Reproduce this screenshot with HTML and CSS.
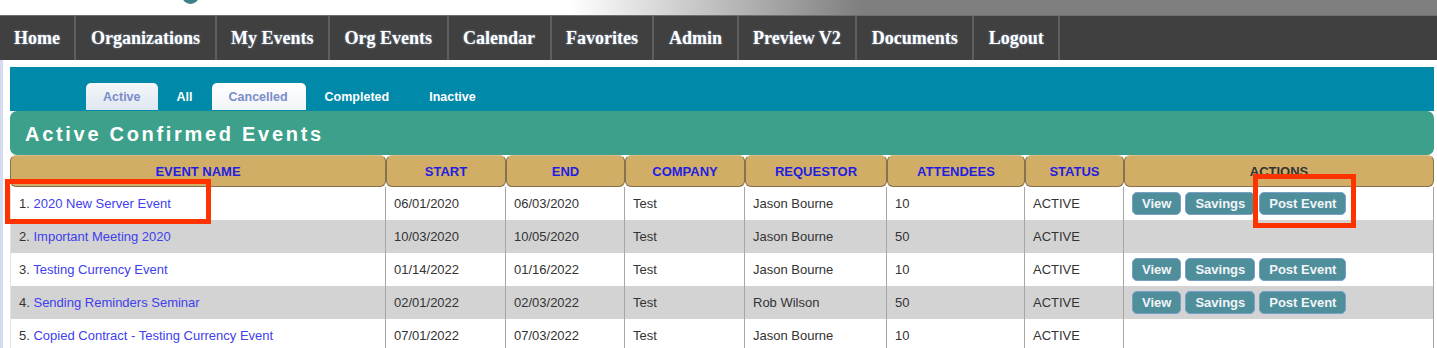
FILE: index.html
```html
<!DOCTYPE html>
<html lang="en">
<head>
  <meta charset="UTF-8">
  <meta name="viewport" content="width=device-width, initial-scale=1.0">
  <title>Active Confirmed Events</title>
  <link rel="stylesheet" href="styles.css">
</head>
<body>
  <div class="topbar">
    <div class="logo-dot"></div>
  </div>
  <div class="nav">
    <a class="nav-item" href="#">Home</a>
    <a class="nav-item" href="#">Organizations</a>
    <a class="nav-item" href="#">My Events</a>
    <a class="nav-item" href="#">Org Events</a>
    <a class="nav-item" href="#">Calendar</a>
    <a class="nav-item" href="#">Favorites</a>
    <a class="nav-item" href="#">Admin</a>
    <a class="nav-item" href="#">Preview V2</a>
    <a class="nav-item" href="#">Documents</a>
    <a class="nav-item" href="#">Logout</a>
  </div>

  <div class="main">
    <div class="tabs">
      <div class="tab tab-box">Active</div>
      <div class="tab">All</div>
      <div class="tab tab-box tab-light">Cancelled</div>
      <div class="tab">Completed</div>
      <div class="tab tab-wide">Inactive</div>
    </div>
    <div class="section-title">Active Confirmed Events</div>

    <table class="events">
      <colgroup>
        <col style="width:376px">
        <col style="width:120px">
        <col style="width:119px">
        <col style="width:120px">
        <col style="width:142px">
        <col style="width:138px">
        <col style="width:99px">
        <col style="width:310px">
      </colgroup>
      <thead>
        <tr>
          <th>EVENT NAME</th>
          <th>START</th>
          <th>END</th>
          <th>COMPANY</th>
          <th>REQUESTOR</th>
          <th>ATTENDEES</th>
          <th>STATUS</th>
          <th class="plain">ACTIONS</th>
        </tr>
      </thead>
      <tbody>
        <tr>
          <td>1. <a href="#">2020 New Server Event</a></td>
          <td>06/01/2020</td>
          <td>06/03/2020</td>
          <td>Test</td>
          <td>Jason Bourne</td>
          <td>10</td>
          <td>ACTIVE</td>
          <td class="actions"><span class="btn">View</span><span class="btn">Savings</span><span class="btn">Post Event</span></td>
        </tr>
        <tr class="alt">
          <td>2. <a href="#">Important Meeting 2020</a></td>
          <td>10/03/2020</td>
          <td>10/05/2020</td>
          <td>Test</td>
          <td>Jason Bourne</td>
          <td>50</td>
          <td>ACTIVE</td>
          <td class="actions"></td>
        </tr>
        <tr>
          <td>3. <a href="#">Testing Currency Event</a></td>
          <td>01/14/2022</td>
          <td>01/16/2022</td>
          <td>Test</td>
          <td>Jason Bourne</td>
          <td>10</td>
          <td>ACTIVE</td>
          <td class="actions"><span class="btn">View</span><span class="btn">Savings</span><span class="btn">Post Event</span></td>
        </tr>
        <tr class="alt">
          <td>4. <a href="#">Sending Reminders Seminar</a></td>
          <td>02/01/2022</td>
          <td>02/03/2022</td>
          <td>Test</td>
          <td>Rob Wilson</td>
          <td>50</td>
          <td>ACTIVE</td>
          <td class="actions"><span class="btn">View</span><span class="btn">Savings</span><span class="btn">Post Event</span></td>
        </tr>
        <tr>
          <td>5. <a href="#">Copied Contract - Testing Currency Event</a></td>
          <td>07/01/2022</td>
          <td>07/03/2022</td>
          <td>Test</td>
          <td>Jason Bourne</td>
          <td>10</td>
          <td>ACTIVE</td>
          <td class="actions"></td>
        </tr>
      </tbody>
    </table>
  </div>

  <!-- annotation boxes -->
  <div class="mark mark-name"></div>
  <div class="mark mark-post"></div>
</body>
</html>
```

FILE: styles.css
```css
body {
  margin: 0;
  padding: 0;
  font-family: "Liberation Sans", Arial, sans-serif;
  background-color: #fff;
  overflow: hidden;
}
.topbar {
  height: 15px;
  overflow: hidden;
  background: linear-gradient(to right, #fff 0, #fff 570px, #7f7f7f 860px, #7f7f7f 100%);
}
.logo-dot {
  width: 17px;
  height: 17px;
  margin: -13px 0 0 182px;
  border-radius: 50%;
  background-color: #3d7f8b;
}
.nav {
  display: flex;
  height: 44px;
  background-color: #404040;
  border-top: 1px solid #6e6e6e;
}
.nav-item {
  display: flex;
  align-items: center;
  padding: 0 14.5px;
  border-right: 2px solid #5d5d62;
  font-family: "Liberation Serif", "Times New Roman", serif;
  font-weight: bold;
  font-size: 18px;
  color: #fff;
  text-decoration: none;
  text-shadow: 0 0 2px #8da4c0;
}
.nav-item:first-child {
  padding-left: 14px;
}
.main {
  padding: 7px 3px 0 7px;
  border-left: 3px solid #d5dcef;
}
.tabs {
  display: flex;
  align-items: flex-end;
  height: 44px;
  padding-left: 76px;
  background-color: #0089a8;
}
.tab {
  display: flex;
  align-items: center;
  height: 27px;
  margin-bottom: 1px;
  margin-right: 2px;
  padding: 0 17px;
  font-size: 12.5px;
  font-weight: bold;
  color: #fff;
}
.tab-box {
  border-radius: 5px 5px 0 0;
  background: linear-gradient(#f4f7fa, #dfe7f1);
  color: #7b8cc8;
}
.tab-light {
  padding: 0 18px 0 17px;
  background: linear-gradient(#fff, #f1f4f8);
}
.tab-wide {
  padding-left: 21px;
}
.section-title {
  display: flex;
  align-items: center;
  height: 42px;
  padding: 2px 0 0 15px;
  border-radius: 7px;
  background-color: #3da08a;
  color: #fff;
  font-size: 20px;
  font-weight: bold;
  letter-spacing: 2.7px;
}
.events {
  width: 1424px;
  table-layout: fixed;
  border-collapse: separate;
  border-spacing: 0;
  font-size: 13px;
  color: #333;
}
.events th {
  height: 30px;
  padding: 0;
  background-color: #d2ad66;
  border: 1px solid #86734e;
  border-top-color: #d9bf8a;
  border-radius: 6px;
  color: #1f1fe0;
  font-weight: bold;
  text-align: center;
}
.events th.plain {
  color: #333;
}
.events td {
  height: 33px;
  padding: 0 8px;
  border-right: 1px solid #a6a6a6;
  white-space: nowrap;
}
.events td:first-child {
  border-left: 1px solid #e2e2e2;
}
.events tr.alt td {
  background-color: #d3d3d3;
}
.events a {
  color: #4040ee;
  text-decoration: none;
}
.actions {
  font-size: 0;
}
.btn {
  display: inline-block;
  height: 21px;
  line-height: 21px;
  margin-right: 4px;
  padding: 0 9px;
  border: 1px solid #7aa0c8;
  border-radius: 5px;
  background-color: #4f8e9b;
  color: #f2f5f8;
  font-size: 13px;
  font-weight: bold;
  vertical-align: middle;
}
.mark {
  position: absolute;
  border: 5px solid #ff3300;
  box-sizing: border-box;
}
.mark-name {
  left: 5px;
  top: 179px;
  width: 206px;
  height: 45px;
}
.mark-post {
  left: 1253px;
  top: 174px;
  width: 103px;
  height: 54px;
}
```
